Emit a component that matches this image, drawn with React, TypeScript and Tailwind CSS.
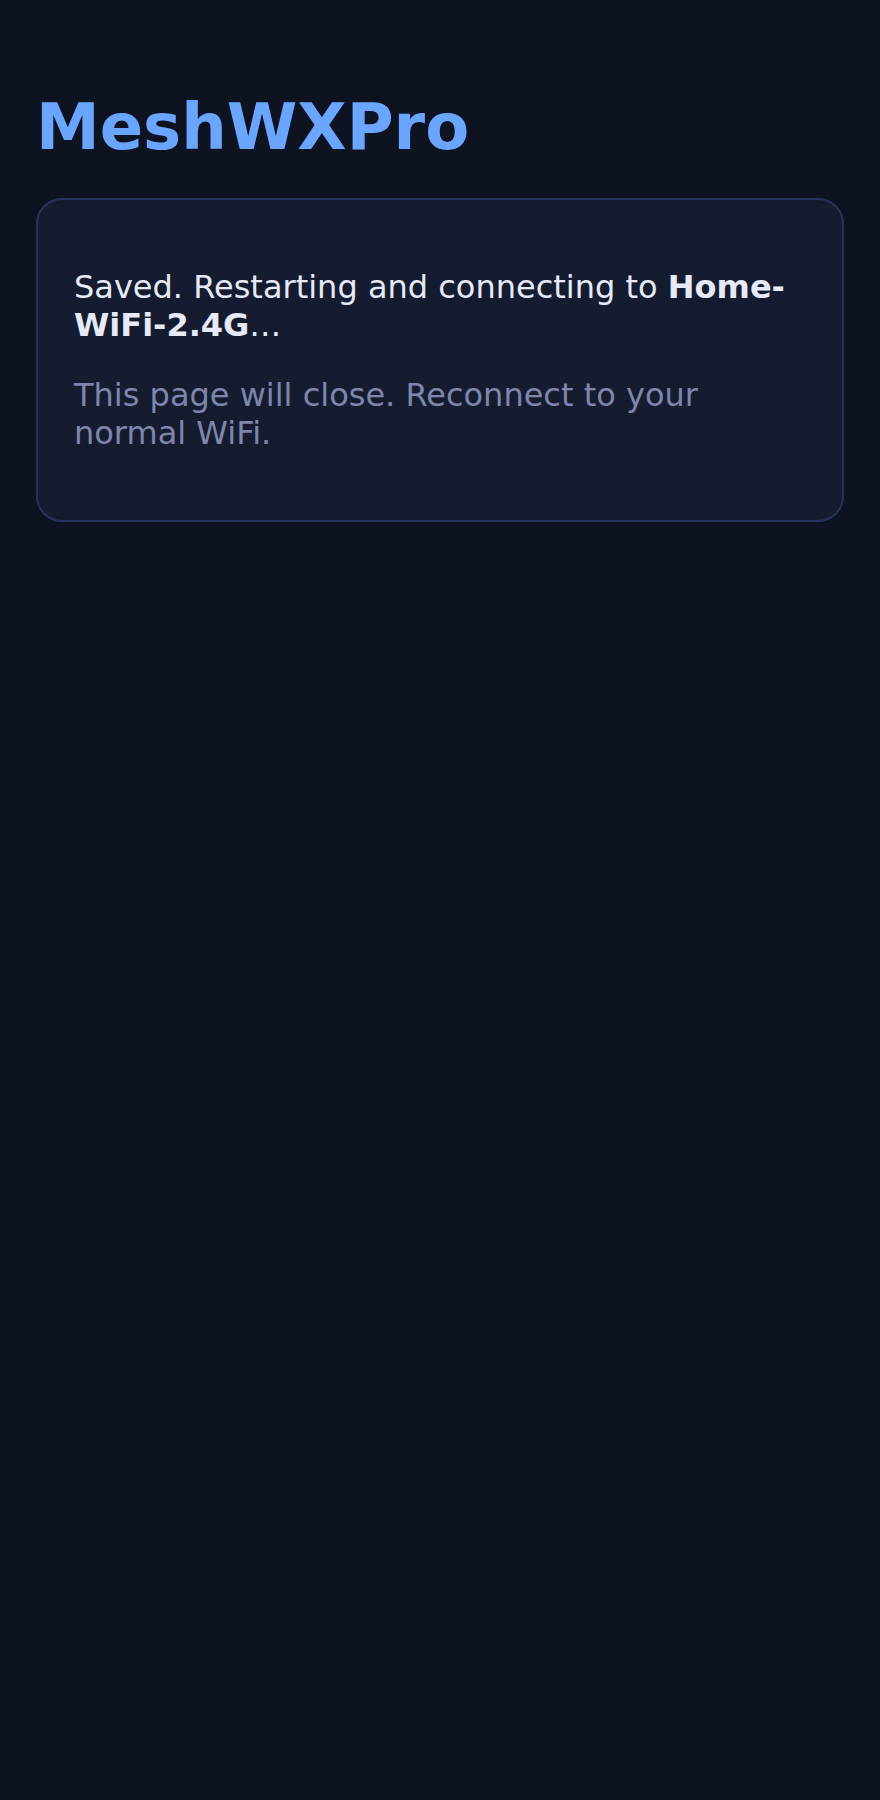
export default function App() {
  return (
    <div className="min-h-[1800px] bg-[#0e1322] px-[36px] pt-[90px] font-['DejaVu_Sans',sans-serif]">
      <h1 className="text-[64px] font-bold leading-[75px] text-[#6aa6ff]">MeshWXPro</h1>
      <div className="mt-[33px] rounded-[26px] border-2 border-[#283260] bg-[#161c2f] px-[36px] py-[68px]">
        <p className="text-[32px] leading-[38px] text-[#e6e9f8]">
          Saved. Restarting and connecting to <b className="font-bold">Home-WiFi-2.4G</b>…
        </p>
        <p className="mt-[32px] text-[32px] leading-[38px] text-[#7d86ad]">
          This page will close. Reconnect to your normal WiFi.
        </p>
      </div>
    </div>
  );
}
